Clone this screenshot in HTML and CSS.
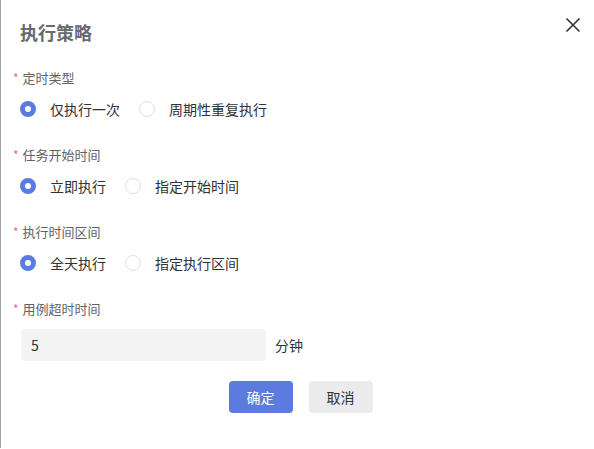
FILE: index.html
```html
<!DOCTYPE html>
<html lang="zh-CN">
<head>
  <meta charset="UTF-8" />
  <meta name="viewport" content="width=device-width, initial-scale=1.0" />
  <title>执行策略</title>
  <link rel="stylesheet" href="styles.css">
</head>
<body>
  <div class="dialog">
    <div class="dialog-header">
      <span class="dialog-title">执行策略</span>
      <span class="close" aria-label="关闭">
        <svg width="16" height="16" viewBox="0 0 16 16">
          <path d="M1.5 1.5 L14.5 14.5 M14.5 1.5 L1.5 14.5" stroke="#303133" stroke-width="1.6" fill="none" />
        </svg>
      </span>
    </div>

    <div class="form-item">
      <div class="label"><span class="required">*</span>定时类型</div>
      <div class="radio-group">
        <label class="radio checked"><span class="dot"></span>仅执行一次</label>
        <label class="radio"><span class="dot"></span>周期性重复执行</label>
      </div>
    </div>

    <div class="form-item">
      <div class="label"><span class="required">*</span>任务开始时间</div>
      <div class="radio-group">
        <label class="radio checked"><span class="dot"></span>立即执行</label>
        <label class="radio"><span class="dot"></span>指定开始时间</label>
      </div>
    </div>

    <div class="form-item">
      <div class="label"><span class="required">*</span>执行时间区间</div>
      <div class="radio-group">
        <label class="radio checked"><span class="dot"></span>全天执行</label>
        <label class="radio"><span class="dot"></span>指定执行区间</label>
      </div>
    </div>

    <div class="form-item">
      <div class="label"><span class="required">*</span>用例超时时间</div>
      <div class="input-row">
        <input class="text-input" type="text" value="5" />
        <span class="unit">分钟</span>
      </div>
    </div>

    <div class="dialog-footer">
      <button class="btn primary">确定</button>
      <button class="btn">取消</button>
    </div>
  </div>
</body>
</html>
```

FILE: styles.css
```css
body {
  margin: 0;
  font-family: "Noto Sans CJK SC", "Noto Sans", sans-serif;
  background: #fff;
}
.dialog {
  box-sizing: border-box;
  height: 448px;
  border-left: 1px solid #a0a0a0;
  padding: 0 0 0 12px;
}
.dialog-header {
  display: flex;
  justify-content: space-between;
  align-items: center;
  height: 66px;
  padding-right: 13px;
}
.dialog-title {
  margin-left: 7px;
  margin-top: -3px;
  font-size: 18px;
  font-weight: bold;
  color: #686a70;
  line-height: 24px;
}
.close {
  display: flex;
  margin-top: -16px;
  cursor: pointer;
}
.form-item {
  margin-bottom: 20px;
}
.label {
  height: 20px;
  line-height: 20px;
  font-size: 13px;
  color: #606266;
  margin-top: 2px;
  margin-bottom: 5px;
}
.required {
  color: #f56c6c;
  margin-right: 4px;
  font-size: 12px;
}
.radio-group {
  display: flex;
  align-items: center;
  height: 32px;
  padding-left: 7px;
  gap: 19px;
}
.radio {
  display: flex;
  align-items: center;
  font-size: 14px;
  color: #303133;
  cursor: pointer;
}
.dot {
  box-sizing: border-box;
  width: 16px;
  height: 16px;
  border-radius: 50%;
  border: 1px solid #dcdfe6;
  margin-right: 14px;
  background: #fff;
}
.radio.checked .dot {
  border: 5px solid #5b7be0;
}
.input-row {
  display: flex;
  align-items: center;
  padding-left: 8px;
  margin-top: 10px;
}
.text-input {
  box-sizing: border-box;
  width: 245px;
  height: 32px;
  border: none;
  border-radius: 4px;
  background: #f4f4f5;
  padding: 0 10px;
  font-family: inherit;
  font-size: 14px;
  color: #303133;
  outline: none;
}
.unit {
  margin-left: 9px;
  font-size: 14px;
  color: #303133;
}
.dialog-footer {
  display: flex;
  justify-content: center;
  gap: 16px;
  padding-right: 6px;
}
.btn {
  width: 64px;
  height: 32px;
  border: none;
  border-radius: 4px;
  background: #ebebeb;
  color: #303133;
  font-family: inherit;
  font-size: 14px;
  cursor: pointer;
}
.btn.primary {
  background: #5c7be0;
  color: #fff;
}
```
